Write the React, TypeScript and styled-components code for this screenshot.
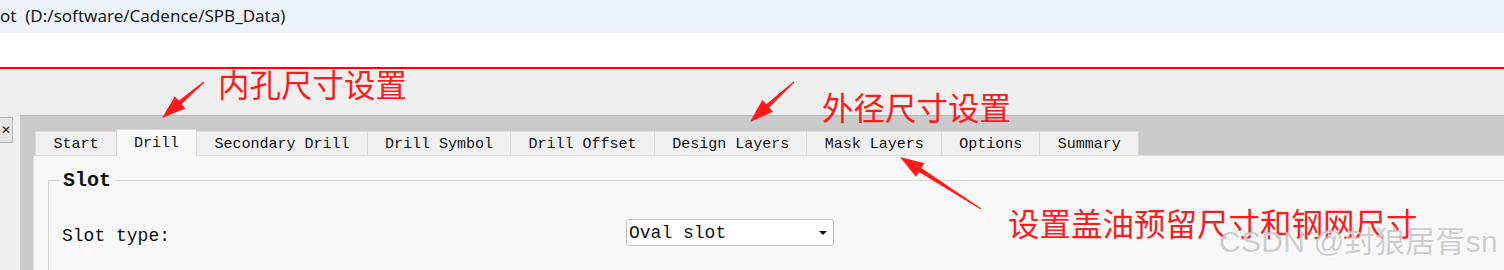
import React from "react";
import styled, { createGlobalStyle } from "styled-components";

const GlobalStyle = createGlobalStyle`
  html, body {
    margin: 0;
    padding: 0;
    background: #ffffff;
  }
`;

const MONO = `"Liberation Mono", "DejaVu Sans Mono", monospace`;
const CJK = `"Noto Sans CJK SC", "Noto Sans", sans-serif`;

const TABS = ["Start", "Drill", "Secondary Drill", "Drill Symbol", "Drill Offset", "Design Layers", "Mask Layers", "Options", "Summary"];

type Pt = [number, number];

// arrow polygon: thin tail, fat triangular head
const arrowPoints = (from: Pt, to: Pt, headLen: number, headW: number) => {
  const dx = to[0] - from[0];
  const dy = to[1] - from[1];
  const len = Math.hypot(dx, dy);
  const ux = dx / len;
  const uy = dy / len;
  const nx = -uy;
  const ny = ux;
  const bx = to[0] - ux * headLen;
  const by = to[1] - uy * headLen;
  const shaft = headW * 0.28;
  const p = (x: number, y: number) => `${x.toFixed(1)},${y.toFixed(1)}`;
  return [
    p(from[0] + nx * 0.6, from[1] + ny * 0.6),
    p(bx + nx * shaft, by + ny * shaft),
    p(bx + nx * headW, by + ny * headW),
    p(to[0], to[1]),
    p(bx - nx * headW, by - ny * headW),
    p(bx - nx * shaft, by - ny * shaft),
    p(from[0] - nx * 0.6, from[1] - ny * 0.6),
  ].join(" ");
};

const Page = styled.div`
  position: relative;
  width: 1504px;
  height: 270px;
  overflow: hidden;
  display: flex;
  flex-direction: column;
`;

const TitleBar = styled.div`
  height: 33px;
  flex: none;
  background: #eef2f9;
  display: flex;
  align-items: center;
  font-family: "Noto Sans", "Liberation Sans", sans-serif;
  font-size: 17px;
  color: #1a1a1a;
  white-space: pre;
  padding-bottom: 3px;
  box-sizing: border-box;
`;

const BlankStrip = styled.div`
  height: 34px;
  flex: none;
  background: #ffffff;
`;

const RedRule = styled.div`
  height: 2px;
  flex: none;
  background: #ff0000;
`;

const Workspace = styled.div`
  flex: 1;
  display: flex;
  min-height: 0;
`;

const SidePanel = styled.div`
  width: 20px;
  flex: none;
  background: #efefef;
  padding-top: 48px;
  box-sizing: border-box;
`;

const CloseBox = styled.div`
  width: 13px;
  height: 26px;
  box-sizing: border-box;
  border: 1px solid #b4b4b4;
  border-left: none;
  background: #e4e4e4;
  display: flex;
  align-items: center;
  justify-content: center;
  font-family: "DejaVu Sans", sans-serif;
  font-size: 12px;
  color: #222;
`;

const Main = styled.div`
  flex: 1;
  display: flex;
  flex-direction: column;
`;

const TopGray = styled.div`
  height: 46px;
  flex: none;
  background: #efefef;
`;

const Band = styled.div`
  flex: 1;
  background: #cacaca;
  border-top: 1px solid #b8b8b8;
  padding: 13px 0 0 13px;
  display: flex;
  flex-direction: column;
`;

const TabStrip = styled.div`
  display: flex;
  align-items: flex-end;
  padding-left: 2px;
  position: relative;
  z-index: 1;
`;

const Tab = styled.div<{ $active?: boolean }>`
  height: ${({ $active }) => ($active ? 27 : 24)}px;
  box-sizing: border-box;
  padding: 0 17px 0 17.5px;
  margin-bottom: ${({ $active }) => ($active ? -1 : 0)}px;
  background: ${({ $active }) => ($active ? "#f8f8f8" : "#f0f0f0")};
  border: 1px solid #dadada;
  border-bottom: none;
  border-right: none;
  display: flex;
  align-items: center;
  padding-top: ${({ $active }) => ($active ? 0 : 1)}px;
  font-family: ${MONO};
  font-size: 15px;
  color: #111;
  white-space: pre;
  &:last-child {
    border-right: 1px solid #dadada;
  }
`;

const Panel = styled.div`
  flex: 1;
  background: #f8f8f8;
  border-top: 1px solid #dcdcdc;
  border-left: 1px solid #e2e2e2;
  padding: 13px 0 0 14px;
`;

const GroupBox = styled.fieldset`
  margin: 0;
  padding: 27px 0 40px 13px;
  border: none;
  border-top: 1px solid #d6d6d6;
  border-left: 1px solid #d6d6d6;
`;

const GroupTitle = styled.legend`
  margin-left: -3px;
  padding: 0 4px 0 4px;
  font-family: ${MONO};
  font-weight: bold;
  font-size: 20px;
  color: #111;
`;

const FieldRow = styled.div`
  display: grid;
  grid-template-columns: 564px 208px;
  align-items: center;
`;

const FieldLabel = styled.div`
  font-family: ${MONO};
  font-size: 18px;
  color: #111;
  padding-top: 6px;
`;

const Select = styled.div`
  height: 27px;
  box-sizing: border-box;
  background: #ffffff;
  border: 1px solid #c4c4c4;
  border-radius: 3px;
  display: flex;
  align-items: center;
  justify-content: space-between;
  padding: 1px 6px 0 2px;
  font-family: ${MONO};
  font-size: 18px;
  color: #111;
  white-space: pre;
`;

const Caret = styled.span`
  width: 0;
  height: 0;
  border-left: 4px solid transparent;
  border-right: 4px solid transparent;
  border-top: 4px solid #111;
`;

const Overlay = styled.svg`
  position: absolute;
  left: 0;
  top: 0;
  pointer-events: none;
`;

const Note = styled.div<{ $x: number; $y: number }>`
  position: absolute;
  left: ${({ $x }) => $x}px;
  top: ${({ $y }) => $y}px;
  font-family: ${CJK};
  font-size: 31.5px;
  line-height: 1;
  color: #ff1a1a;
  white-space: nowrap;
`;

const Watermark = styled.div`
  position: absolute;
  left: 1219px;
  top: 227px;
  font-family: "Liberation Sans", "Noto Sans CJK SC", sans-serif;
  font-size: 30px;
  letter-spacing: 0.3px;
  line-height: 1;
  color: rgba(190, 190, 190, 0.75);
  text-shadow: 1px 1px 1px rgba(255, 255, 255, 0.8);
  white-space: nowrap;
`;

const ARROWS: { from: Pt; to: Pt }[] = [
  { from: [204, 82], to: [162, 118] },
  { from: [794, 82], to: [750, 122] },
  { from: [981, 209], to: [900, 157] },
];

export default function App() {
  return (
    <>
      <GlobalStyle />
      <Page>
        <TitleBar>{"ot  (D:/software/Cadence/SPB_Data)"}</TitleBar>
        <BlankStrip />
        <RedRule />
        <Workspace>
          <SidePanel>
            <CloseBox>✕</CloseBox>
          </SidePanel>
          <Main>
            <TopGray />
            <Band>
              <TabStrip>
                {TABS.map((t) => (
                  <Tab key={t} $active={t === "Drill"}>
                    {t}
                  </Tab>
                ))}
              </TabStrip>
              <Panel>
                <GroupBox>
                  <GroupTitle>Slot</GroupTitle>
                  <FieldRow>
                    <FieldLabel>Slot type:</FieldLabel>
                    <Select>
                      Oval slot
                      <Caret />
                    </Select>
                  </FieldRow>
                </GroupBox>
              </Panel>
            </Band>
          </Main>
        </Workspace>

        <Note $x={218} $y={68}>内孔尺寸设置</Note>
        <Note $x={822} $y={91}>外径尺寸设置</Note>
        <Note $x={1008} $y={207}>设置盖油预留尺寸和钢网尺寸</Note>
        <Watermark>CSDN @封狼居胥sn</Watermark>

        <Overlay width={1504} height={270}>
          {ARROWS.map((a, i) => (
            <polygon key={i} points={arrowPoints(a.from, a.to, 24, 8)} fill="#ff1a1a" />
          ))}
        </Overlay>
      </Page>
    </>
  );
}
